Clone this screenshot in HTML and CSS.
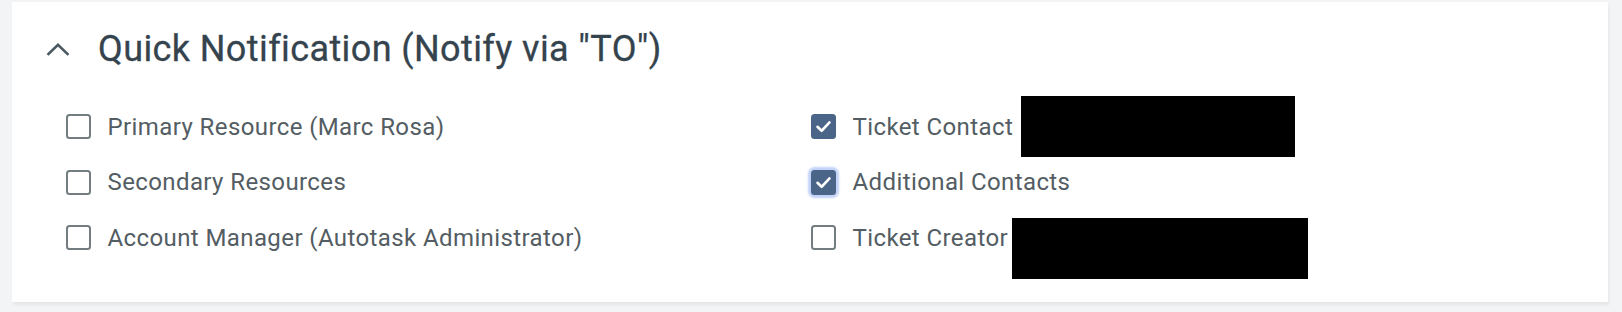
FILE: index.html
```html
<!DOCTYPE html>
<html lang="en">
<head>
<meta charset="utf-8">
<title>Quick Notification</title>
<link rel="stylesheet" href="styles.css">
</head>
<body>
<section class="panel">
  <header class="panel-header">
    <svg class="chevron" width="24" height="14" viewBox="0 0 24 14" aria-hidden="true">
      <polyline points="2.5,12 12,2.8 21.5,12" fill="none" stroke="#4a5862" stroke-width="2.6" stroke-linecap="square" stroke-linejoin="miter"/>
    </svg>
    <h2 class="panel-title">Quick Notification (Notify via "TO")</h2>
  </header>
  <div class="options">
    <label class="option">
      <span class="box"></span>
      <span class="text">Primary Resource (Marc Rosa)</span>
    </label>
    <label class="option">
      <span class="box checked"><svg viewBox="0 0 25 25" width="25" height="25"><polyline points="6.5,12.8 10.6,16.8 18.5,8.4" fill="none" stroke="#fff" stroke-width="2.6" stroke-linecap="round" stroke-linejoin="round"/></svg></span>
      <span class="text">Ticket Contact</span>
      <span class="redact redact-one"></span>
    </label>
    <label class="option">
      <span class="box"></span>
      <span class="text">Secondary Resources</span>
    </label>
    <label class="option">
      <span class="box checked focused"><svg viewBox="0 0 25 25" width="25" height="25"><polyline points="6.5,12.8 10.6,16.8 18.5,8.4" fill="none" stroke="#fff" stroke-width="2.6" stroke-linecap="round" stroke-linejoin="round"/></svg></span>
      <span class="text">Additional Contacts</span>
    </label>
    <label class="option">
      <span class="box"></span>
      <span class="text">Account Manager (Autotask Administrator)</span>
    </label>
    <label class="option">
      <span class="box"></span>
      <span class="text">Ticket Creator</span>
      <span class="redact redact-two"></span>
    </label>
  </div>
</section>
</body>
</html>
```

FILE: styles.css
```css
html, body {
  margin: 0;
  padding: 0;
}

body {
  background: #f3f4f6;
  font-family: Roboto, "Liberation Sans", Arial, sans-serif;
  width: 1622px;
  height: 312px;
  overflow: hidden;
}

.panel {
  margin: 2px 0 0 12px;
  width: 1596px;
  height: 300px;
  background: #ffffff;
  box-shadow: 1px 3px 3px rgba(0, 0, 0, 0.06);
  box-sizing: border-box;
}

.panel-header {
  display: flex;
  align-items: center;
  gap: 28px;
  height: 40px;
  padding: 27px 0 0 34px;
}

.chevron {
  display: block;
  flex: none;
}

.panel-title {
  margin: 0;
  font-size: 36px;
  font-weight: 400;
  line-height: 40px;
  letter-spacing: 0.4px;
  color: #34434d;
  white-space: nowrap;
  -webkit-text-stroke: 0.3px #34434d;
}

.options {
  display: grid;
  grid-template-columns: 745px 745px;
  grid-auto-rows: 55.5px;
  margin-top: 30px;
  padding-left: 54px;
}

.option {
  display: flex;
  align-items: center;
  gap: 16.5px;
  font-size: 24px;
  letter-spacing: 0.4px;
  color: #535d63;
  white-space: nowrap;
}

.box {
  flex: none;
  width: 25px;
  height: 25px;
  box-sizing: border-box;
  border: 2px solid #737c81;
  border-radius: 3.5px;
  background: #fff;
}

.box.checked {
  border: none;
  background: #4b6588;
}

.box.checked svg {
  display: block;
}

.box.focused {
  box-shadow: 0 0 2px 3px rgba(120, 155, 240, 0.45);
}

.redact {
  flex: none;
  background: #000;
  height: 61px;
}

.redact-one {
  width: 274px;
  margin-left: -8.5px;
}

.redact-two {
  width: 296px;
  margin-left: -13px;
  margin-top: 22px;
}
```
